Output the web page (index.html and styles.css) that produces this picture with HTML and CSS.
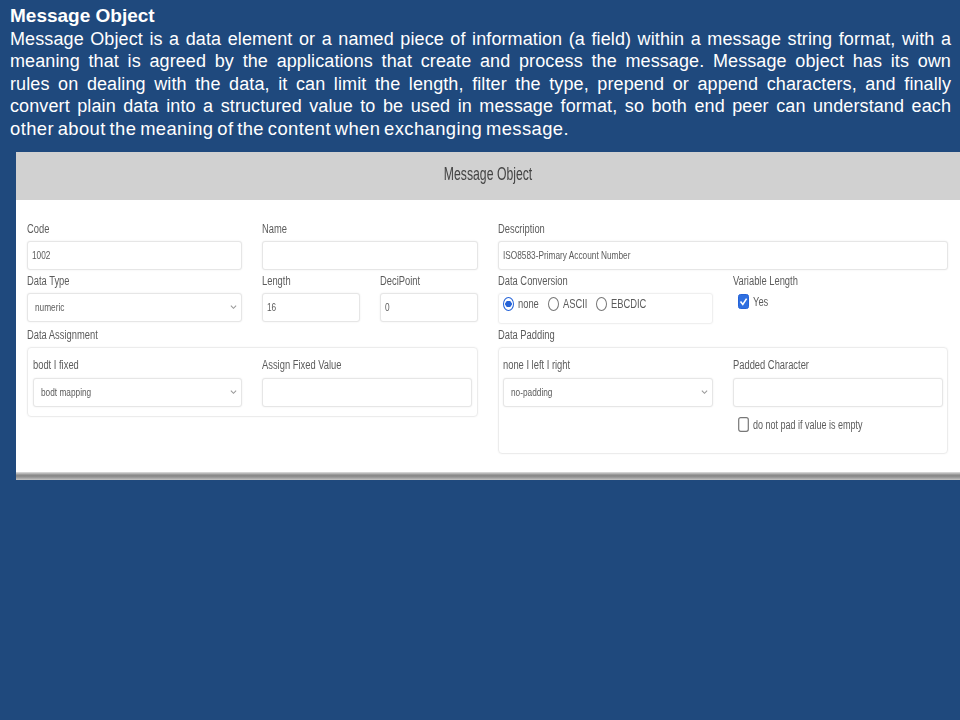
FILE: index.html
```html
<!DOCTYPE html>
<html lang="en">
<head>
<meta charset="utf-8">
<title>Message Object</title>
<link rel="stylesheet" href="styles.css">
</head>
<body>
<section class="intro">
  <h1>Message Object</h1>
  <p class="line">Message Object is a data element or a named piece of information (a field) within a message string format, with a</p>
  <p class="line">meaning that is agreed by the applications that create and process the message. Message object has its own</p>
  <p class="line">rules on dealing with the data, it can limit the length, filter the type, prepend or append characters, and finally</p>
  <p class="line">convert plain data into a structured value to be used in message format, so both end peer can understand each</p>
  <p class="line last">other about the meaning of the content when exchanging message.</p>
</section>
<main class="panel">
  <header class="panel-head"><span class="squish">Message Object</span></header>
  <div class="form">
    <div class="col">
      <div class="row two">
        <div class="group"><label><span class="squish">Code</span></label><div class="field"><span class="squish">1002</span></div></div>
        <div class="group"><label><span class="squish">Name</span></label><div class="field"></div></div>
      </div>
      <div class="row three">
        <div class="group"><label><span class="squish">Data Type</span></label>
          <div class="field select"><span class="squish">numeric</span><svg class="chev" viewBox="0 0 8 6"><path d="M1 1.5 4 4.5 7 1.5"/></svg></div></div>
        <div class="group"><label><span class="squish">Length</span></label><div class="field"><span class="squish">16</span></div></div>
        <div class="group"><label><span class="squish">DeciPoint</span></label><div class="field"><span class="squish">0</span></div></div>
      </div>
      <div class="group section"><label><span class="squish">Data Assignment</span></label>
        <div class="box row two-inner">
          <div class="group"><label><span class="squish">bodt I fixed</span></label>
            <div class="field select"><span class="squish">bodt mapping</span><svg class="chev" viewBox="0 0 8 6"><path d="M1 1.5 4 4.5 7 1.5"/></svg></div></div>
          <div class="group"><label><span class="squish">Assign Fixed Value</span></label><div class="field"></div></div>
        </div>
      </div>
    </div>
    <div class="col">
      <div class="group"><label><span class="squish">Description</span></label><div class="field"><span class="squish">ISO8583-Primary Account Number</span></div></div>
      <div class="row conv">
        <div class="group"><label><span class="squish">Data Conversion</span></label>
          <div class="radios">
            <span class="radio on"></span><span class="squish opt">none</span>
            <span class="radio"></span><span class="squish opt">ASCII</span>
            <span class="radio"></span><span class="squish opt">EBCDIC</span>
          </div></div>
        <div class="group"><label><span class="squish">Variable Length</span></label>
          <div class="check-row">
            <svg class="check" viewBox="0 0 11 15"><rect x=".5" y=".5" width="10" height="14" rx="2" fill="#2f6fe0" stroke="#2563d8"/><path d="M2.5 7.5 4.8 10.4 8.6 4.6" fill="none" stroke="#fff" stroke-width="1.6"/></svg>
            <span class="squish">Yes</span>
          </div></div>
      </div>
      <div class="group section section-right"><label><span class="squish">Data Padding</span></label>
        <div class="box row two-inner tall">
          <div class="group"><label><span class="squish">none I left I right</span></label>
            <div class="field select"><span class="squish">no-padding</span><svg class="chev" viewBox="0 0 8 6"><path d="M1 1.5 4 4.5 7 1.5"/></svg></div></div>
          <div class="group"><label><span class="squish">Padded Character</span></label><div class="field"></div>
            <div class="check-row pad">
              <svg class="check" viewBox="0 0 11 15"><rect x=".7" y=".7" width="9.6" height="13.6" rx="2" fill="#fff" stroke="#777" stroke-width="1.2"/></svg>
              <span class="squish">do not pad if value is empty</span>
            </div></div>
        </div>
      </div>
    </div>
  </div>
  <div class="panel-foot"></div>
</main>
</body>
</html>
```
FILE: styles.css
```css
* { box-sizing: border-box; }
html, body { margin: 0; height: 720px; overflow: hidden; }
body { background: #1f497d; font-family: "Liberation Sans", Arial, sans-serif; }

.intro { padding: 5px 9px 0 10px; color: #fff; font-size: 18px; line-height: 22.5px; height: 152px; }
.intro h1 { margin: 0; font-size: 19px; line-height: 22.5px; font-weight: 700; }
.line { margin: 0; text-align: justify; text-align-last: justify; white-space: nowrap; letter-spacing: .1px; }
.line.last { text-align-last: left; font-size: 18.4px; letter-spacing: .4px; word-spacing: -1.7px; }

.panel { margin-left: 16px; width: 944px; height: 328px; background: #fff; display: flex; flex-direction: column; filter: blur(.4px); }
.panel-head { height: 48px; background: #d1d1d1; display: flex; align-items: center; justify-content: center; color: #444; font-size: 18px; padding-bottom: 4px; }
.panel-head .squish { transform: scaleX(.68); transform-origin: center; }

.squish { display: inline-block; white-space: nowrap; transform: scaleX(.78); transform-origin: left center; }

.form { flex: 1; display: grid; grid-template-columns: 451px 450px; column-gap: 20px; padding: 22px 12px 0 11px; font-size: 12px; color: #5c5c5c; }
.col { display: flex; flex-direction: column; gap: 4px; }
.group { display: flex; flex-direction: column; min-width: 0; }
.group > label { height: 19px; line-height: 15px; }
.row { display: grid; column-gap: 20px; }
.two { grid-template-columns: 215px 216px; }
.three { grid-template-columns: 215px 98px 98px; }
.conv { grid-template-columns: 215px 215px; }

.field { height: 29px; border: 1px solid #e6e6e6; border-radius: 3px; background: #fff; box-shadow: 0 0 2px rgba(0,0,0,.08); padding: 0 4px 2px; display: flex; align-items: center; justify-content: space-between; font-size: 11.5px; }
.field .squish { transform: scaleX(.72); }
.select { padding: 0 4px 2px 7px; }
.chev { width: 7px; height: 6px; fill: none; stroke: #999; stroke-width: 1.2; }

.section { margin-top: 2px; }
.section-right { margin-top: 0; }
.box { border: 1px solid #ececec; border-radius: 4px; padding: 10px 5px 8px; box-shadow: 0 0 2px rgba(0,0,0,.05); height: 70px; }
.box .group > label { height: 20px; }
.two-inner { grid-template-columns: 209px 210px; }
.tall { height: 107px; padding-left: 4px; grid-template-columns: 210px 210px; }

.radios { height: 31px; border: 1px solid #efefef; border-radius: 3px; padding: 3px 4px 0; display: flex; align-items: flex-start; box-shadow: 0 0 2px rgba(0,0,0,.05); }
.radio { width: 11px; height: 14px; flex: none; border: 1px solid #777; border-radius: 50%; background: #fff; margin-right: 4px; }
.radio.on { border: 1.5px solid #2563d8; background: radial-gradient(circle, #2563d8 0 3px, #fff 3.5px); }
.opt { width: 30px; line-height: 14px; }
.opt:nth-of-type(4) { width: 33px; }
.check-row { display: flex; align-items: center; gap: 4px; padding-left: 5px; height: 15px; margin-top: 1px; }
.check { width: 11px; height: 15px; flex: none; }
.check-row.pad { margin-top: 10px; }
.check-row.pad .squish { transform: scaleX(.75); }

.panel-foot { height: 8px; background: linear-gradient(#e0e0e0 0, #888 40%, #8f8f8f 60%, #c4c4c4 100%); }
```
